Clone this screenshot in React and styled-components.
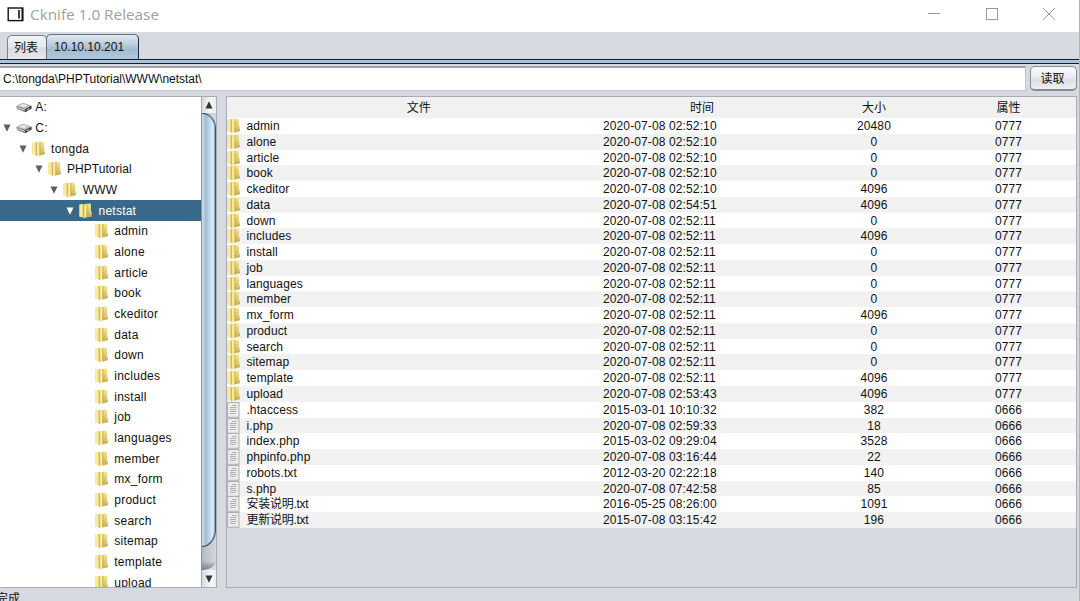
import React from 'react';
import styled, { createGlobalStyle, css } from 'styled-components';

const Global = createGlobalStyle`
  * { box-sizing: border-box; }
  html, body { margin: 0; padding: 0; overflow: hidden; }
  body {
    font-family: "Liberation Sans", "Noto Sans CJK SC", sans-serif;
    font-size: 12px;
    color: #111;
    cursor: default;
  }
`;

const Window = styled.div`
  width: 1080px;
  height: 601px;
  overflow: hidden;
  display: flex;
  flex-direction: column;
  background: #d6d9e0;
  border-right: 1px solid #b4b4b6;
`;

const TitleBar = styled.header`
  flex: none;
  height: 32px;
  background: #fff;
  display: flex;
  align-items: center;
  padding: 0 23px 3px 7px;
`;

const Title = styled.h1`
  flex: 1;
  margin: 0 0 2px 6px;
  font: 400 15.3px/26px "Open Sans", "Noto Sans", sans-serif;
  color: #a0a0a0;
`;

const WindowControls = styled.div`
  display: flex;
  gap: 43.5px;
  height: 14px;
  margin-top: -1px;
`;

const TabStrip = styled.nav`
  flex: none;
  height: 27px;
  display: flex;
  align-items: flex-end;
  padding-left: 7px;
`;

const Tab = styled.div`
  width: ${(p) => p.$width}px;
  height: ${(p) => (p.$active ? 25 : 24)}px;
  padding-left: ${(p) => (p.$active ? 7 : 6)}px;
  line-height: 24px;
  border: 1px solid #7b818c;
  border-bottom: 0;
  border-radius: 5px 5px 0 0;
  background: linear-gradient(#f3f4f6, #e6e8ec 45%, #d8dbe1 55%, #e6e8ed);
  ${(p) =>
    p.$active &&
    css`
      margin-left: -1px;
      line-height: 25px;
      border-color: #5f7285;
      border-right-color: #1d2a3d;
      background: linear-gradient(#e0e9f0, #c0d0df 35%, #a4bace 60%, #b0c8df);
    `}
`;

const TabRule = styled.div`
  flex: none;
  height: 5px;
  background: #aac4de;
  border-top: 1px solid #151c2c;
  border-bottom: 1px solid #151c2c;
`;

const AddressBar = styled.div`
  flex: none;
  height: 32px;
  padding: 2px 2px 5px 0;
  display: flex;
  gap: 4px;
`;

const AddressField = styled.div`
  width: 1026px;
  background: #fff;
  border: 1px solid #c3c6cc;
  border-left: 0;
  border-top: 2px solid #a0a3a9;
  padding-left: 3px;
  line-height: 22px;
  letter-spacing: -0.03px;
  white-space: nowrap;
`;

const ReadButton = styled.button`
  width: 47px;
  margin: 0;
  padding: 2px 0 0;
  border: 1px solid #868d9a;
  border-bottom: 2px solid #858a94;
  border-radius: 5px;
  background: linear-gradient(#fafafc, #eceef1 45%, #dcdfe5 60%, #eef0f4);
  font: inherit;
  line-height: 20px;
  text-indent: -2px;
  color: #111;
`;

const Workspace = styled.main`
  flex: none;
  height: 492px;
  display: flex;
  gap: 9px;
`;

const TreePane = styled.section`
  width: 217px;
  display: flex;
  border: solid #a7acb6;
  border-width: 1px 1px 1px 0;
  background: #fff;
`;

const TreeList = styled.ul`
  flex: 1;
  margin: 0;
  padding: 0;
  list-style: none;
  overflow: hidden;
`;

const TreeRow = styled.li`
  height: 20.68px;
  display: flex;
  align-items: center;
  padding-left: ${(p) => p.$depth * 15.8}px;
  background: ${(p) => (p.$selected ? '#39698a' : 'transparent')};
  color: ${(p) => (p.$selected ? '#fff' : '#111')};
  letter-spacing: ${(p) => (p.$depth === 2 ? 0.06 : 0.24)}px;
`;

const Toggle = styled.span`
  width: 16px;
  height: 20px;
  flex: none;
  display: flex;
  align-items: center;
  padding-left: 3px;
`;

const NodeIcon = styled.span`
  flex: none;
  display: flex;
  width: 19.3px;
`;

const Scrollbar = styled.div`
  width: 15px;
  flex: none;
  display: flex;
  flex-direction: column;
  background: #d9dbdf;
`;

const ScrollButton = styled.div`
  height: ${(p) => p.$height}px;
  flex: none;
  display: flex;
  justify-content: center;
  align-items: center;
  border-left: 1px solid #a5abb4;
  background: linear-gradient(90deg, #d8dade, #f6f7f8 60%, #eceef1);
`;

const ScrollTrack = styled.div`
  flex: 1;
  border-left: 1px solid #8b929d;
  background: linear-gradient(transparent calc(100% - 9px), #7c8087), linear-gradient(90deg, #b5b8bd, #d6d8dc);
  border-radius: 0 0 13px 0 / 0 0 10px 0;
`;

const ScrollThumb = styled.div`
  height: 434px;
  border: 1px solid #2f4a63;
  border-right: 1.5px solid #3b5269;
  border-left: 0;
  border-radius: 0 14px 14px 0 / 0 15px 17px 0;
  box-shadow: inset -1px 0 0 #93aabf;
  background: linear-gradient(90deg, #d0deea, #a2bbd3 30%, #b6cee4 48%, #d8ecfd 82%, #c3d8ea);
`;

const FilePane = styled.section`
  width: 851px;
  border: 1px solid #a7acb6;
`;

const FileTable = styled.div`
  display: flex;
  flex-direction: column;
`;

const columns = css`
  display: grid;
  grid-template-columns: 13.4px 356.6px 210px 134px 1fr;
`;

const HeaderRow = styled.div`
  ${columns}
  height: 21px;
  line-height: 22px;
  background: #f1f1f2;
  text-align: center;
`;

const FileRow = styled.div`
  ${columns}
  height: 15.77px;
  line-height: 17px;
  background: ${(p) => (p.$odd ? '#f2f2f2' : '#fff')};
`;

const Cell = styled.span`
  display: block;
  height: 17px;
  white-space: nowrap;
  padding-left: ${(p) => (p.$center ? 0 : 6)}px;
  text-align: ${(p) => (p.$center ? 'center' : 'left')};
  letter-spacing: ${(p) => (p.$tight ? -0.25 : 0.12)}px;
`;

const IconCell = styled.span`
  display: flex;
`;

const StatusBar = styled.footer`
  flex: 1;
  line-height: 22px;
  margin-left: -4px;
`;

const FolderIcon = () => (
  <svg width="13" height="16" viewBox="0 0 13 16">
    <defs>
      <linearGradient id="leaf" x1="0" x2="1">
        <stop offset="0" stopColor="#efdf8a" />
        <stop offset=".4" stopColor="#fbf1ab" />
        <stop offset="1" stopColor="#dfc45e" />
      </linearGradient>
      <linearGradient id="back" x1="0" x2="0" y1="0" y2="1">
        <stop offset="0" stopColor="#f3e596" />
        <stop offset="1" stopColor="#d0ae42" />
      </linearGradient>
    </defs>
    <path d="M5.5 1 11.3.6l.7 1v12l-4.5.9-2-.5z" fill="url(#back)" />
    <path d="M.2 1.6 4.8.8v14L.2 13.6z" fill="url(#leaf)" />
    <path d="M4.3 1.8 5.2 1v14.6l-.9-.9z" fill="#c8a846" />
    <path d="M5.2 2.6 7.6.6v12.8l-2.4 2.2z" fill="#f9eda6" />
    <path d="M7.4 1h1v12.7l-1 .8z" fill="#c4a23e" opacity=".75" />
    <path d="M11 8.4h1.8v5H11z" fill="#dccf8f" />
    <path d="M11.4 11.2h1.2v1.7h-1.2z" fill="#6eaaa2" />
  </svg>
);

const FileIcon = () => (
  <svg width="13" height="16" viewBox="0 0 13 16">
    <rect x=".6" y=".5" width="11.4" height="14.8" fill="#ececec" stroke="#adadad" />
    <path
      d="M5 3.5h4.5M3 5.5h6.5M3 7.5h6M3 9.5h6.5M3 11.5h5.5"
      stroke="#a8a8a8"
      strokeWidth=".9"
    />
  </svg>
);

const DriveIcon = () => (
  <svg width="16" height="11" viewBox="0 0 16 11">
    <path d="M.3 4.2 6.5 1l8.7 2.4.3 3L9.3 10.3 1 7z" fill="#77797b" />
    <path d="M.3 4 6.2 1l9 2.4L9.5 6.9z" fill="#bcbdbf" />
    <path d="m2.8 3.8 4-1.8 4.6 1.3L8 5.2z" fill="#e9e9e9" />
    <path d="m9.5 7 6-3.3v2.7l-6.2 3.9z" fill="#424345" />
    <path d="m1.2 5.6 7.4 2.6M11 7.8l2.2-1.2" stroke="#dcdcdc" strokeWidth="1" />
  </svg>
);

const Arrow = ({ up, color = '#5d5f62', size = 8 }) => (
  <svg width={size} height={size} viewBox="0 0 8 8">
    <path d={up ? 'M4 .3 7.5 7.5H.5z' : 'M.5.5h7L4 7.7z'} fill={color} />
  </svg>
);

const folders = [
  'admin', 'alone', 'article', 'book', 'ckeditor', 'data', 'down', 'includes', 'install',
  'job', 'languages', 'member', 'mx_form', 'product', 'search', 'sitemap', 'template', 'upload',
];

const tree = [
  { name: 'A:', depth: 0, drive: true },
  { name: 'C:', depth: 0, drive: true, open: true },
  { name: 'tongda', depth: 1, open: true },
  { name: 'PHPTutorial', depth: 2, open: true },
  { name: 'WWW', depth: 3, open: true },
  { name: 'netstat', depth: 4, open: true, selected: true },
  ...folders.map((name) => ({ name, depth: 5 })),
];

const folderDetails = {
  admin: ['02:52:10', 20480],
  alone: ['02:52:10', 0],
  article: ['02:52:10', 0],
  book: ['02:52:10', 0],
  ckeditor: ['02:52:10', 4096],
  data: ['02:54:51', 4096],
  includes: ['02:52:11', 4096],
  mx_form: ['02:52:11', 4096],
  template: ['02:52:11', 4096],
  upload: ['02:53:43', 4096],
};

const files = [
  ...folders.map((name) => {
    const [time, size] = folderDetails[name] || ['02:52:11', 0];
    return { name, time: `2020-07-08 ${time}`, size, mode: '0777', folder: true };
  }),
  { name: '.htaccess', time: '2015-03-01 10:10:32', size: 382, mode: '0666' },
  { name: 'i.php', time: '2020-07-08 02:59:33', size: 18, mode: '0666' },
  { name: 'index.php', time: '2015-03-02 09:29:04', size: 3528, mode: '0666' },
  { name: 'phpinfo.php', time: '2020-07-08 03:16:44', size: 22, mode: '0666' },
  { name: 'robots.txt', time: '2012-03-20 02:22:18', size: 140, mode: '0666' },
  { name: 's.php', time: '2020-07-08 07:42:58', size: 85, mode: '0666' },
  { name: '安装说明.txt', time: '2016-05-25 08:26:00', size: 1091, mode: '0666', tight: true },
  { name: '更新说明.txt', time: '2015-07-08 03:15:42', size: 196, mode: '0666', tight: true },
];

export default function App() {
  return (
    <Window>
      <Global />
      <TitleBar>
        <svg width="17" height="15" viewBox="0 0 17 15">
          <rect x="1.2" y="1" width="14.6" height="12.6" fill="#fff" stroke="#111" strokeWidth="1.4" />
          <path d="M12 3v8.6M15.3 1v13" stroke="#111" strokeWidth="1.6" />
        </svg>
        <Title>Cknife 1.0 Release</Title>
        <WindowControls>
          <svg width="14" height="14" viewBox="0 0 14 14">
            <path d="M1 6.5h12" stroke="#999" />
          </svg>
          <svg width="14" height="14" viewBox="0 0 14 14">
            <rect x="1.5" y="1.5" width="11" height="11" fill="none" stroke="#999" />
          </svg>
          <svg width="14" height="14" viewBox="0 0 14 14">
            <path d="m1 1 12 12M13 1 1 13" stroke="#999" />
          </svg>
        </WindowControls>
      </TitleBar>
      <TabStrip>
        <Tab $width={40}>列表</Tab>
        <Tab $width={93} $active>10.10.10.201</Tab>
      </TabStrip>
      <TabRule />
      <AddressBar>
        <AddressField>{'C:\\tongda\\PHPTutorial\\WWW\\netstat\\'}</AddressField>
        <ReadButton>读取</ReadButton>
      </AddressBar>
      <Workspace>
        <TreePane>
          <TreeList>
            {tree.map((node) => (
              <TreeRow key={node.name} $depth={node.depth} $selected={node.selected}>
                <Toggle>
                  {node.open && <Arrow color={node.selected ? '#fff' : undefined} />}
                </Toggle>
                <NodeIcon>{node.drive ? <DriveIcon /> : <FolderIcon />}</NodeIcon>
                {node.name}
              </TreeRow>
            ))}
          </TreeList>
          <Scrollbar>
            <ScrollButton $height={16}>
              <Arrow up color="#333" />
            </ScrollButton>
            <ScrollTrack>
              <ScrollThumb />
            </ScrollTrack>
            <ScrollButton $height={17}>
              <Arrow color="#333" />
            </ScrollButton>
          </Scrollbar>
        </TreePane>
        <FilePane>
          <FileTable>
            <HeaderRow>
              <span />
              <span>文件</span>
              <span>时间</span>
              <span>大小</span>
              <span>属性</span>
            </HeaderRow>
            {files.map((file, i) => (
              <FileRow key={file.name} $odd={i % 2 === 1}>
                <IconCell>{file.folder ? <FolderIcon /> : <FileIcon />}</IconCell>
                <Cell $tight={file.tight}>{file.name}</Cell>
                <Cell>{file.time}</Cell>
                <Cell $center>{file.size}</Cell>
                <Cell $center>{file.mode}</Cell>
              </FileRow>
            ))}
          </FileTable>
        </FilePane>
      </Workspace>
      <StatusBar>完成</StatusBar>
    </Window>
  );
}
